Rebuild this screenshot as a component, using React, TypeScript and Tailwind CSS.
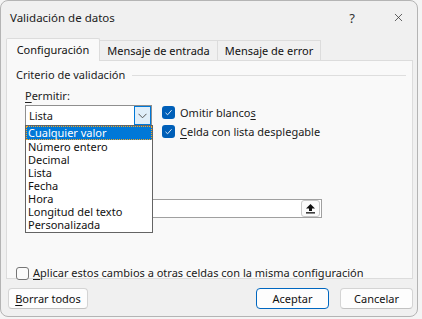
import { X } from "lucide-react";

const ITEMS = [
  "Cualquier valor",
  "Número entero",
  "Decimal",
  "Lista",
  "Fecha",
  "Hora",
  "Longitud del texto",
  "Personalizada",
];

function Check({ checked }: { checked: boolean }) {
  if (!checked)
    return <div className="w-[13px] h-[13px] rounded-[3px] border border-[#767676] bg-[#fbfbfb]" />;
  return (
    <div className="w-[13px] h-[13px] rounded-[3px] bg-[#005fb8] flex items-center justify-center">
      <svg width="9" height="9" viewBox="0 0 9 9">
        <path d="M1.5 4.8 L3.6 6.8 L7.6 2.2" fill="none" stroke="#dbe9f7" strokeWidth="1" />
      </svg>
    </div>
  );
}

export default function App() {
  return (
    <div className="w-[422px] h-[319px] bg-[#f4f4f4] overflow-hidden font-['Segoe_UI','Noto_Sans',sans-serif] text-[11px] leading-[16px] text-[#1a1a1a]">
      <div className="w-[418px] h-[317px] bg-[#f0f0f0] border border-[#b4b4b4] rounded-[8px] flex flex-col">
        {/* Title bar */}
        <div className="h-[33px] flex items-center pl-[9px]">
          <span className="text-[11.5px] text-[#1b1b1b]">Validación de datos</span>
          <div className="flex-1" />
          <span className="text-[13px] text-[#333] mr-[37px]">?</span>
          <X className="w-[13px] h-[13px] text-[#333] mr-[12px]" strokeWidth={1.4} />
        </div>

        {/* Tabs */}
        <div className="mt-[4px] ml-[5px] flex items-end h-[22px]">
          <div className="relative z-10 w-[94px] h-[23px] -mb-px bg-[#f9f9f9] border border-b-0 border-[#dcdcdc] rounded-t-[2px] flex items-center justify-center text-[#111]">
            Configuración
          </div>
          <div className="w-[118px] h-[20px] bg-[#f0f0f0] border border-l-0 border-b-0 border-[#dcdcdc] flex items-center justify-center text-[#111]">
            Mensaje de entrada
          </div>
          <div className="w-[103px] h-[20px] bg-[#f0f0f0] border border-l-0 border-b-0 border-[#dcdcdc] flex items-center justify-center text-[#111]">
            Mensaje de error
          </div>
        </div>

        {/* Panel */}
        <div className="relative ml-[5px] w-[407px] h-[219px] bg-[#f9f9f9] border border-[#dcdcdc] flex flex-col">
          <div className="mt-[6px] pl-[9px] pr-[6px] flex items-center gap-[7px] h-[16px]">
            <span className="text-[#222]">Criterio de validación</span>
            <div className="flex-1 h-px bg-[#dedede]" />
          </div>

          <div className="mt-[5px] pl-[18px] h-[16px] text-[#222]">
            <span className="underline underline-offset-2">P</span>ermitir:
          </div>

          <div className="mt-[1px] pl-[18px] flex items-start gap-[10px]">
            <div className="relative w-[127px] h-[21px] bg-white border border-[#8f8f8f] flex items-center">
              <span className="pl-[3px] flex-1">Lista</span>
              <div className="w-[17px] h-[19px] bg-[#e0eef9] border border-[#0078d7] flex items-center justify-center">
                <svg width="9" height="6" viewBox="0 0 9 6">
                  <path d="M0.5 0.8 L4.5 4.8 L8.5 0.8" fill="none" stroke="#555" strokeWidth="1" />
                </svg>
              </div>

              {/* Open dropdown list */}
              <div className="absolute left-[-1px] top-[19px] z-20 w-[128px] h-[108px] bg-white border border-[#646464]">
                {ITEMS.map((it, i) =>
                  i === 0 ? (
                    <div
                      key={it}
                      className="h-[14px] leading-[14px] pl-[2px] bg-[#0078d7] text-white outline-1 outline-dotted outline-[#f5a623] -outline-offset-1"
                    >
                      {it}
                    </div>
                  ) : (
                    <div key={it} className="h-[13px] leading-[13px] pl-[2px] text-[#111]">
                      {it}
                    </div>
                  )
                )}
              </div>
            </div>

            <div className="flex flex-col gap-[6px] pt-[1px]">
              <div className="flex items-center gap-[5px] h-[13px]">
                <Check checked />
                <span>
                  Omitir blanco<span className="underline underline-offset-2">s</span>
                </span>
              </div>
              <div className="flex items-center gap-[5px] h-[13px]">
                <Check checked />
                <span>
                  <span className="underline underline-offset-2">C</span>elda con lista desplegable
                </span>
              </div>
            </div>
          </div>

          {/* Origen input (partly covered by the list) */}
          <div className="mt-[61px] ml-[18px] w-[297px] h-[20px] bg-white border border-[#a0a0a0] flex items-center justify-end pr-[1px]">
            <div className="w-[19px] h-[17px] rounded-[3px] border border-[#c8c8c8] bg-[#fbfbfb] flex items-center justify-center">
              <svg width="11" height="11" viewBox="0 0 11 11">
                <path d="M5.5 1 L10 5.5 L7 5.5 L7 8 L4 8 L4 5.5 L1 5.5 Z" fill="#111" />
                <rect x="1" y="9.2" width="9" height="1.3" fill="#111" />
              </svg>
            </div>
          </div>

          <div className="mt-[48px] pl-[9px] flex items-center gap-[4px] h-[14px]">
            <Check checked={false} />
            <span>
              <span className="underline underline-offset-2">A</span>plicar estos cambios a otras celdas con la misma configuración
            </span>
          </div>
        </div>

        {/* Footer */}
        <div className="mt-[9px] flex items-center pl-[7px] pr-[4px]">
          <button className="w-[80px] h-[21px] bg-[#fdfdfd] border border-[#d4d4d4] border-b-[#c2c2c2] rounded-[4px] text-[#111]">
            <span className="underline underline-offset-2">B</span>orrar todos
          </button>
          <div className="flex-1" />
          <button className="w-[73px] h-[21px] bg-[#fdfdfd] border border-[#0067c0] rounded-[4px] text-[#111]">
            Aceptar
          </button>
          <button className="ml-[11px] w-[73px] h-[21px] bg-[#fdfdfd] border border-[#d4d4d4] border-b-[#c2c2c2] rounded-[4px] text-[#111]">
            Cancelar
          </button>
        </div>
      </div>
    </div>
  );
}
